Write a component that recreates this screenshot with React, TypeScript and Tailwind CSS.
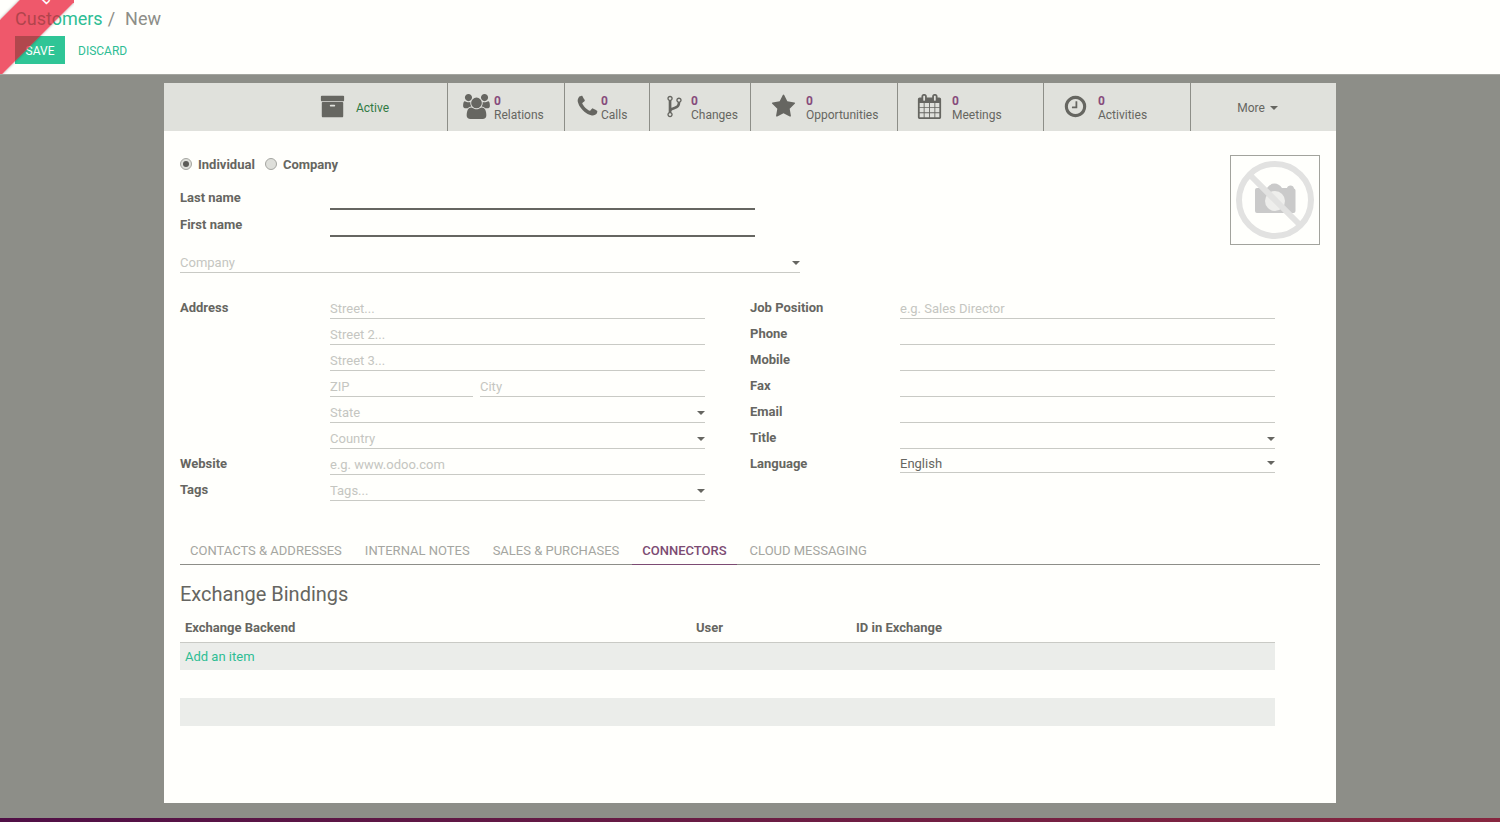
import { useState, type ReactNode } from "react";

function Glyph({ d, box = "0 0 1792 1792", className = "w-[25px]" }: { d: string; box?: string; className?: string }) {
  return (
    <svg viewBox={box} className={`mb-0.5 h-[25px] shrink-0 fill-[#666661] ${className}`} aria-hidden="true">
      <path d={d} />
    </svg>
  );
}

const ARCHIVE =
  "M1088 832q0-26-19-45t-45-19h-256q-26 0-45 19t-19 45 19 45 45 19h256q26 0 45-19t19-45zm576-192v960q0 26-19 45t-45 19h-1408q-26 0-45-19t-19-45v-960q0-26 19-45t45-19h1408q26 0 45 19t19 45zm64-448v256q0 26-19 45t-45 19h-1536q-26 0-45-19t-19-45v-256q0-26 19-45t45-19h1536q26 0 45 19t19 45z";
const USERS =
  "M529 896q-162 5-265 128h-134q-82 0-138-40.5t-56-118.5q0-353 124-353 6 0 43.5 21t97.5 42.5 119 21.5q67 0 133-23-5 37-5 66 0 139 81 256zm1071 637q0 120-73 189.5t-194 69.5h-874q-121 0-194-69.5t-73-189.5q0-53 3.5-103.5t14-109 26.5-108.5 43-97.5 62-81 85.5-53.5 111.5-20q10 0 43 21.5t73 48 107 48 135 21.5 135-21.5 107-48 73-48 43-21.5q61 0 111.5 20t85.5 53.5 62 81 43 97.5 26.5 108.5 14 109 3.5 103.5zm-1024-1277q0 106-75 181t-181 75-181-75-75-181 75-181 181-75 181 75 75 181zm704 384q0 159-112.5 271.5t-271.5 112.5-271.5-112.5-112.5-271.5 112.5-271.5 271.5-112.5 271.5 112.5 112.5 271.5zm576 225q0 78-56 118.5t-138 40.5h-134q-103-123-265-128 81-117 81-256 0-29-5-66 66 23 133 23 59 0 119-21.5t97.5-42.5 43.5-21q124 0 124 353zm-128-609q0 106-75 181t-181 75-181-75-75-181 75-181 181-75 181 75 75 181z";
const PHONE =
  "M1600 1240q0 27-10 70.5t-21 68.5q-21 50-122 106-94 51-186 51-27 0-52.5-3.5t-57.5-12.5-47.5-14.5-55.5-20.5-49-18q-98-35-175-83-128-79-264.5-215.5t-215.5-264.5q-48-77-83-175-3-9-18-49t-20.5-55.5-14.5-47.5-12.5-57.5-3.5-52.5q0-92 51-186 56-101 106-122 25-11 68.5-21t70.5-10q14 0 21 3 18 6 53 76 11 19 30 54t35 63.5 31 53.5q3 4 17.5 25t21.5 35.5 7 28.5q0 20-28.5 50t-62 55-62 53-28.5 46q0 9 5 22.5t8.5 20.5 14 24 11.5 19q76 137 174 235t235 174q2 1 19 11.5t24 14 20.5 8.5 22.5 5q18 0 46-28.5t53-62 55-62 50-28.5q14 0 28.5 7t35.5 21.5 25 17.5q25 15 53.5 31t63.5 35 54 30q70 35 76 53 3 7 3 21z";
const FORK =
  "M672 1472q0-40-28-68t-68-28-68 28-28 68 28 68 68 28 68-28 28-68zm0-1152q0-40-28-68t-68-28-68 28-28 68 28 68 68 28 68-28 28-68zm640 128q0-40-28-68t-68-28-68 28-28 68 28 68 68 28 68-28 28-68zm96 0q0 52-26 96.5t-70 69.5q-2 287-226 414-67 38-203 81-128 40-169.5 71t-41.5 100v26q44 25 70 69.5t26 96.5q0 80-56 136t-136 56-136-56-56-136q0-52 26-96.5t70-69.5v-820q-44-25-70-69.5t-26-96.5q0-80 56-136t136-56 136 56 56 136q0 52-26 96.5t-70 69.5v497q54-26 154-57 55-17 87.5-29.5t70.5-31 59-39.5 40.5-51 28-69.5 8.5-91.5q-44-25-70-69.5t-26-96.5q0-80 56-136t136-56 136 56 56 136z";
const STAR =
  "M1728 647q0 22-26 48l-363 354 86 500q1 7 1 20 0 21-10.5 35.5t-30.5 14.5q-19 0-40-12l-449-236-449 236q-22 12-40 12-21 0-31.5-14.5t-10.5-35.5q0-6 2-20l86-500-364-354q-25-27-25-48 0-37 56-46l502-73 225-455q19-41 49-41t49 41l225 455 502 73q56 9 56 46z";
const CALENDAR =
  "M192 1664h288v-288h-288v288zm352 0h320v-288h-320v288zm-352-352h288v-320h-288v320zm352 0h320v-320h-320v320zm-352-384h288v-288h-288v288zm736 736h320v-288h-320v288zm-384-736h320v-288h-320v288zm768 736h288v-288h-288v288zm-384-352h320v-320h-320v320zm-352-864v-288q0-13-9.5-22.5t-22.5-9.5h-64q-13 0-22.5 9.5t-9.5 22.5v288q0 13 9.5 22.5t22.5 9.5h64q13 0 22.5-9.5t9.5-22.5zm736 864h288v-320h-288v320zm-384-384h320v-288h-320v288zm384 0h288v-288h-288v288zm32-480v-288q0-13-9.5-22.5t-22.5-9.5h-64q-13 0-22.5 9.5t-9.5 22.5v288q0 13 9.5 22.5t22.5 9.5h64q13 0 22.5-9.5t9.5-22.5zm384-64v1280q0 52-38 90t-90 38h-1408q-52 0-90-38t-38-90v-1280q0-52 38-90t90-38h128v-96q0-66 47-113t113-47h64q66 0 113 47t47 113v96h384v-96q0-66 47-113t113-47h64q66 0 113 47t47 113v96h128q52 0 90 38t38 90z";
const CLOCK =
  "M1024 544v448q0 14-9 23t-23 9h-320q-14 0-23-9t-9-23v-64q0-14 9-23t23-9h224v-352q0-14 9-23t23-9h64q14 0 23 9t9 23zm416 352q0-148-73-273t-198-198-273-73-273 73-198 198-73 273 73 273 198 198 273 73 273-73 198-198 73-273zm224 0q0 209-103 385.5t-279.5 279.5-385.5 103-385.5-103-279.5-279.5-103-385.5 103-385.5 279.5-279.5 385.5-103 385.5 103 279.5 279.5 103 385.5z";

function Caret() {
  return (
    <svg viewBox="0 0 8 4" className="h-1 w-2 shrink-0 fill-[#666661]" aria-hidden="true">
      <path d="M0 0h8L4 4z" />
    </svg>
  );
}

function Stat({ label, icon, className }: { label: string; icon: ReactNode; className: string }) {
  return (
    <button type="button" className={`flex h-12 items-center border-l border-[#8d8e88] text-left ${className}`}>
      {icon}
      <span className="pt-0.5 text-xs leading-[14px]">
        <span className="block font-bold text-[#874b7b]">0</span>
        {label}
      </span>
    </button>
  );
}

const labelClass = "w-[150px] shrink-0 leading-5 font-bold";
const inputClass =
  "block h-[21px] w-full min-w-0 appearance-none rounded-none border-b border-[#c9cac5] bg-transparent p-0 leading-5 text-[#666661] outline-none placeholder:text-[#c5c6c1]";

function Text({ id, placeholder, label, className = "" }: { id: string; placeholder?: string; label?: string; className?: string }) {
  return <input id={id} type="text" placeholder={placeholder} aria-label={label} className={`${inputClass} ${className}`} />;
}

function Combo({ id, placeholder, label }: { id: string; placeholder?: string; label?: string }) {
  return (
    <div className="flex h-[21px] w-full items-center border-b border-[#c9cac5] pt-0.5">
      <input
        id={id}
        type="text"
        role="combobox"
        aria-expanded={false}
        aria-label={label}
        placeholder={placeholder}
        className="h-[18px] min-w-0 flex-1 bg-transparent p-0 outline-none placeholder:text-[#c5c6c1]"
      />
      <Caret />
    </div>
  );
}

function Row({ id, label, children }: { id?: string; label?: string; children: ReactNode }) {
  return (
    <div className="flex h-[26px] items-start">
      {label ? (
        <label htmlFor={id} className={labelClass}>
          {label}
        </label>
      ) : (
        <span className={labelClass} />
      )}
      <div className="flex min-w-0 flex-1 gap-[7px]">{children}</div>
    </div>
  );
}

const tabs = ["Contacts & Addresses", "Internal Notes", "Sales & Purchases", "Connectors", "Cloud Messaging"];
const radioClass =
  "mb-0.5 grid size-3 appearance-none place-items-center rounded-full border border-[#a5a6a1] bg-[#dedfda] before:size-1.5 before:rounded-full checked:before:bg-[#5c5c58]";

export default function App() {
  const [kind, setKind] = useState("individual");
  const [tab, setTab] = useState("Connectors");

  return (
    <div className="relative flex min-h-screen flex-col overflow-hidden bg-[#8d8e88] font-['Roboto',sans-serif] text-[13px] text-[#666661]">
      <header className="h-[75px] border-b border-[#a4a59f] bg-[#fffffc] px-[15px] pt-2">
        <nav className="flex text-lg leading-[22px] text-[#8d8e88]">
          <a href="#customers" className="text-[#2ebd94]">
            Customers
          </a>
          <span className="px-[5px]">/</span>
          <span className="pl-[5px]">New</span>
        </nav>
        <div className="mt-1.5 flex gap-[3px] text-xs">
          <button type="button" className="h-7 min-w-[50px] bg-[#2fc596] px-2.5 pt-0.5 text-white uppercase">
            Save
          </button>
          <button type="button" className="h-7 px-2.5 pt-0.5 text-[#2ebd94] uppercase">
            Discard
          </button>
        </div>
      </header>

      <div className="pointer-events-none absolute top-0 left-0 size-[74px] overflow-hidden">
        <div className="absolute top-[7px] -left-[54px] flex h-10 w-[150px] -rotate-45 items-center justify-end bg-[#e8112d]/70 pr-8 pb-1.5 text-base text-white shadow-[0_0_3px_rgba(0,0,0,0.3)]">
          D
        </div>
      </div>

      <main className="flex flex-1 flex-col px-4 pt-2 pb-[15px]">
        <div className="mx-auto flex w-full max-w-[1172px] flex-1 flex-col bg-[#fffffc]">
          <div className="flex justify-end bg-[#e0e1dc]">
            <button type="button" className="flex h-12 w-[146px] items-center gap-[11px] pl-[19px] text-xs text-[#307a43]">
              <Glyph d={ARCHIVE} />
              <span className="pt-0.5">Active</span>
            </button>
            <Stat label="Relations" className="w-[117px] gap-1 pl-[15px]" icon={<Glyph d={USERS} box="-64 0 1920 1792" className="w-[27px]" />} />
            <Stat label="Calls" className="w-[85px] gap-px pl-2.5" icon={<Glyph d={PHONE} />} />
            <Stat label="Changes" className="w-[101px] gap-1 pl-3" icon={<Glyph d={FORK} />} />
            <Stat label="Opportunities" className="w-[147px] gap-2.5 pl-5" icon={<Glyph d={STAR} />} />
            <Stat label="Meetings" className="w-[146px] gap-2.5 pl-[19px]" icon={<Glyph d={CALENDAR} />} />
            <Stat label="Activities" className="w-[147px] gap-2.5 pl-[19px]" icon={<Glyph d={CLOCK} />} />
            <button type="button" className="flex h-12 w-[146px] items-center justify-center gap-[5px] border-l border-[#8d8e88] pt-0.5 pr-3 text-xs">
              More <Caret />
            </button>
          </div>

          <div className="px-4 pt-6">
            <div className="flex justify-between">
              <div className="min-w-0 flex-1">
                <div className="flex h-5 items-center gap-2.5 font-bold">
                  {["Individual", "Company"].map((name) => (
                    <label key={name} className="flex items-center gap-1.5">
                      <input
                        type="radio"
                        name="kind"
                        checked={kind === name.toLowerCase()}
                        onChange={() => setKind(name.toLowerCase())}
                        className={radioClass}
                      />
                      {name}
                    </label>
                  ))}
                </div>
                <div className="mt-[13px] flex max-w-[575px] flex-col">
                  {[
                    ["last", "Last name"],
                    ["first", "First name"],
                  ].map(([id, name]) => (
                    <div key={id} className="flex h-[27px]">
                      <label htmlFor={id} className={labelClass}>
                        {name}
                      </label>
                      <input id={id} type="text" className="h-[22px] min-w-0 flex-1 border-b-2 border-[#666661] bg-transparent outline-none" />
                    </div>
                  ))}
                </div>
                <div className="mt-2.5 max-w-[620px]">
                  <Combo id="company" placeholder="Company" label="Company" />
                </div>
              </div>
              <button type="button" aria-label="Photo" className="size-[90px] border border-[#a2a39d] bg-[#fffffc] p-1">
                <svg viewBox="0 0 80 80" className="size-20">
                  <path d="M20 30q0-2 2-2h10q3-4.500 7.500-4.500T47 28h5q.5-2.500 3.500-2.500T59 28.500q1.500.5 1.500 2V51q0 2-2 2H22q-2 0-2-2z" fill="#cacaca" />
                  <circle cx="40" cy="41" r="10" fill="#eeeeec" />
                  <circle cx="40" cy="40" r="36" fill="none" stroke="#e2e2e1" strokeWidth="6" />
                  <path d="M15 15l51 51" stroke="#e2e2e1" strokeWidth="6" />
                </svg>
              </button>
            </div>

            <div className="mt-[25px] grid grid-cols-2 gap-x-[45px] pr-[45px]">
              <div>
                <Row id="street" label="Address">
                  <Text id="street" placeholder="Street..." />
                </Row>
                <Row>
                  <Text id="street2" placeholder="Street 2..." label="Street 2" />
                </Row>
                <Row>
                  <Text id="street3" placeholder="Street 3..." label="Street 3" />
                </Row>
                <Row>
                  <Text id="zip" placeholder="ZIP" label="ZIP" className="flex-[143]" />
                  <Text id="city" placeholder="City" label="City" className="flex-[225]" />
                </Row>
                <Row>
                  <Combo id="state" placeholder="State" label="State" />
                </Row>
                <Row>
                  <Combo id="country" placeholder="Country" label="Country" />
                </Row>
                <Row id="website" label="Website">
                  <Text id="website" placeholder="e.g. www.odoo.com" />
                </Row>
                <Row id="tags" label="Tags">
                  <Combo id="tags" placeholder="Tags..." />
                </Row>
              </div>
              <div>
                <Row id="job" label="Job Position">
                  <Text id="job" placeholder="e.g. Sales Director" />
                </Row>
                {["Phone", "Mobile", "Fax", "Email"].map((name) => (
                  <Row key={name} id={name} label={name}>
                    <Text id={name} />
                  </Row>
                ))}
                <Row id="title" label="Title">
                  <Combo id="title" />
                </Row>
                <Row id="language" label="Language">
                  <div className="flex min-w-0 flex-1 items-center border-b border-[#c9cac5]">
                    <select id="language" className="h-[18px] min-w-0 flex-1 appearance-none bg-transparent p-0 outline-none">
                      <option>English</option>
                    </select>
                    <Caret />
                  </div>
                </Row>
              </div>
            </div>

            <div role="tablist" className="mt-[31px] flex gap-[3px] border-b border-[#8d8e88]">
              {tabs.map((name) => (
                <button
                  key={name}
                  type="button"
                  role="tab"
                  aria-selected={tab === name}
                  onClick={() => setTab(name)}
                  className={`-mb-px h-7 border-b px-2.5 uppercase ${
                    tab === name ? "border-[#7c4b72] font-medium text-[#7c4b72]" : "border-transparent text-[#a5a6a1]"
                  }`}
                >
                  {name}
                </button>
              ))}
            </div>

            <h2 className="mt-4 text-xl leading-[26px]">Exchange Bindings</h2>
            <div className="mt-1.5 pr-[45px]">
              <table className="w-full table-fixed border-collapse text-left">
                <thead>
                  <tr className="h-[29px] border-b border-[#c9cac5]">
                    <th className="px-[5px] font-bold">Exchange Backend</th>
                    <th className="w-[160px] px-[5px] font-bold">User</th>
                    <th className="w-[424px] px-[5px] font-bold">ID in Exchange</th>
                  </tr>
                </thead>
                <tbody>
                  <tr className="h-7 bg-[#ebedea]">
                    <td colSpan={3} className="px-[5px]">
                      <a href="#add" className="text-[#2ebd94]">
                        Add an item
                      </a>
                    </td>
                  </tr>
                  <tr className="h-7">
                    <td colSpan={3} />
                  </tr>
                  <tr className="h-7 bg-[#ebedea]">
                    <td colSpan={3} />
                  </tr>
                </tbody>
              </table>
            </div>
          </div>
        </div>
      </main>
      <footer className="h-1 bg-linear-to-r from-[#500f46] to-[#86263f]" />
    </div>
  );
}
